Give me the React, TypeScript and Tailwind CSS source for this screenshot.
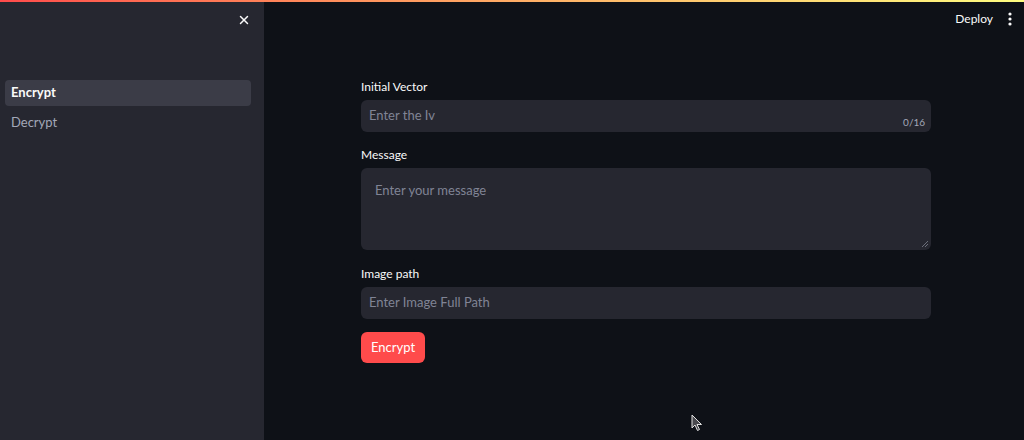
import { X } from 'lucide-react';

const font = { fontFamily: '"Lato", "Noto Sans", sans-serif' };

function Field({ label, placeholder, counter }: { label: string; placeholder: string; counter?: string }) {
  return (
    <div className="flex flex-col">
      <label className="text-[12px] text-[#fafafa] h-[13px] leading-[13px] mb-[7px]">{label}</label>
      <div className="relative h-[32px] rounded-[6px] bg-[#262730] flex items-center px-[8px]">
        <span className="text-[13px] text-[#808495]">{placeholder}</span>
        {counter && (
          <span className="absolute right-[6px] bottom-[2px] text-[10px] text-[#a3a8b8]">{counter}</span>
        )}
      </div>
    </div>
  );
}

export default function App() {
  return (
    <div className="relative w-[1024px] h-[440px] flex bg-[#0e1117] overflow-hidden" style={font}>
      <div className="absolute top-0 left-0 right-0 h-[2px] bg-gradient-to-r from-[#ff4b4b] to-[#fffd80]" />

      <aside className="w-[264px] h-full bg-[#262730] flex flex-col shrink-0">
        <div className="h-[40px] flex items-start justify-end pr-[13px] pt-[13px]">
          <X className="w-[14px] h-[14px] text-[#fafafa]" strokeWidth={2.5} />
        </div>
        <nav className="mt-[40px] pl-[5px] pr-[13px] flex flex-col gap-[4px]">
          <div className="h-[26px] rounded-[4px] bg-[#3b3c47] flex items-center px-[6px] text-[13px] font-bold text-[#fafafa]">
            Encrypt
          </div>
          <div className="h-[26px] flex items-center px-[6px] text-[13px] text-[#a3a8b8]">Decrypt</div>
        </nav>
      </aside>

      <main className="flex-1 flex flex-col">
        <header className="h-[40px] flex items-center justify-end pr-[12px] gap-[15px]">
          <span className="text-[12px] text-[#fafafa] mt-[-2px]">Deploy</span>
          <svg width="4" height="14" viewBox="0 0 4 14" className="mt-[-2px]">
            <circle cx="2" cy="2" r="1.6" fill="#fafafa" />
            <circle cx="2" cy="7" r="1.6" fill="#fafafa" />
            <circle cx="2" cy="12" r="1.6" fill="#fafafa" />
          </svg>
        </header>

        <div className="w-[570px] ml-[97px] mt-[40px] flex flex-col">
          <Field label="Initial Vector" placeholder="Enter the Iv" counter="0/16" />

          <div className="flex flex-col mt-[16px]">
            <label className="text-[12px] text-[#fafafa] h-[13px] leading-[13px] mb-[7px]">Message</label>
            <div className="relative h-[82px] rounded-[6px] bg-[#262730] px-[14px] pt-[9px]">
              <span className="text-[13px] text-[#808495]">Enter your message</span>
              <svg width="8" height="8" viewBox="0 0 8 8" className="absolute right-[2px] bottom-[2px]">
                <line x1="7" y1="1" x2="1" y2="7" stroke="#6b6e7a" strokeWidth="1" />
                <line x1="7" y1="4" x2="4" y2="7" stroke="#6b6e7a" strokeWidth="1" />
              </svg>
            </div>
          </div>

          <div className="mt-[17px]">
            <Field label="Image path" placeholder="Enter Image Full Path" />
          </div>

          <button className="mt-[13px] self-start h-[31px] px-[10px] rounded-[6px] bg-[#ff4b4b] text-white text-[13px]">
            Encrypt
          </button>
        </div>
      </main>

      <svg width="12" height="18" viewBox="0 0 12 18" className="absolute left-[691px] top-[414px]">
        <path d="M1 1 L1 14 L4 11 L6.5 16.5 L8.5 15.5 L6 10.5 L10.5 10.5 Z" fill="#4a4a4f" stroke="#e0e0e0" strokeWidth="1" />
      </svg>
    </div>
  );
}
